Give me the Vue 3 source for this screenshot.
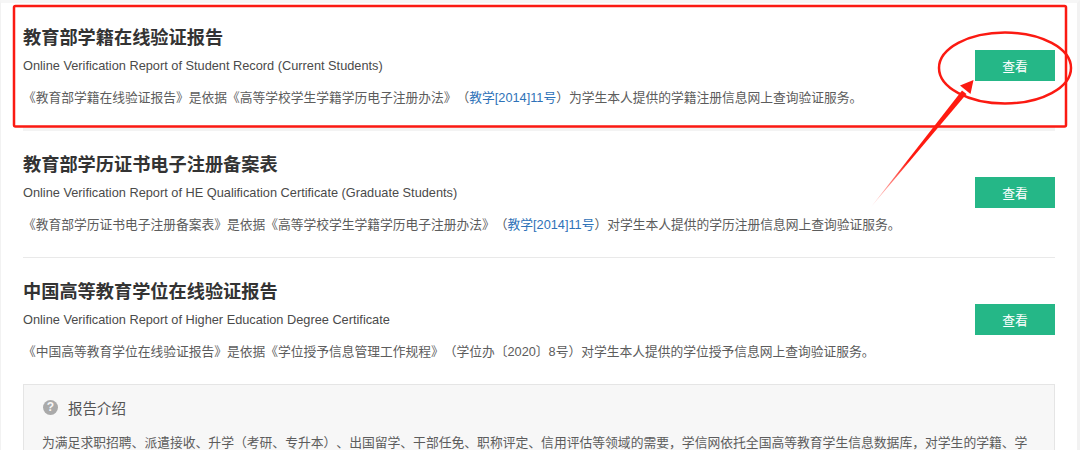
<script setup>
const reports = [
  {
    title: '教育部学籍在线验证报告',
    en: 'Online Verification Report of Student Record (Current Students)',
    before: '《教育部学籍在线验证报告》是依据《高等学校学生学籍学历电子注册办法》（',
    link: '教学[2014]11号',
    after: '）为学生本人提供的学籍注册信息网上查询验证服务。'
  },
  {
    title: '教育部学历证书电子注册备案表',
    en: 'Online Verification Report of HE Qualification Certificate (Graduate Students)',
    before: '《教育部学历证书电子注册备案表》是依据《高等学校学生学籍学历电子注册办法》（',
    link: '教学[2014]11号',
    after: '）对学生本人提供的学历注册信息网上查询验证服务。'
  },
  {
    title: '中国高等教育学位在线验证报告',
    en: 'Online Verification Report of Higher Education Degree Certificate',
    before: '《中国高等教育学位在线验证报告》是依据《学位授予信息管理工作规程》（学位办〔2020〕8号）对学生本人提供的学位授予信息网上查询验证服务。',
    link: '',
    after: ''
  }
]
</script>

<template>
  <div class="page">
    <div class="content">
      <section v-for="r in reports" :key="r.title" class="row">
        <div class="info">
          <h2 class="title">{{ r.title }}</h2>
          <p class="en">{{ r.en }}</p>
          <p class="desc">{{ r.before }}<a v-if="r.link" class="link">{{ r.link }}</a>{{ r.after }}</p>
        </div>
        <button class="btn">查看</button>
      </section>
      <section class="intro">
        <div class="intro-head">
          <span class="q">?</span>
          <span class="intro-title">报告介绍</span>
        </div>
        <p class="intro-text">为满足求职招聘、派遣接收、升学（考研、专升本）、出国留学、干部任免、职称评定、信用评估等领域的需要，学信网依托全国高等教育学生信息数据库，对学生的学籍、学</p>
      </section>
    </div>
    <svg class="marks" width="1080" height="450" viewBox="0 0 1080 450">
      <defs>
        <linearGradient id="tail" gradientUnits="userSpaceOnUse" x1="871" y1="207" x2="966" y2="92">
          <stop offset="0" stop-color="#ff1a10" stop-opacity="0.1" />
          <stop offset="0.4" stop-color="#ff1a10" />
          <stop offset="1" stop-color="#ff1a10" />
        </linearGradient>
      </defs>
      <rect x="14" y="6" width="1052" height="120.5" rx="1.5" fill="none" stroke="#fb1a12" stroke-width="2.5" />
      <ellipse cx="1005" cy="68" rx="66" ry="35.5" fill="none" stroke="#fb1a12" stroke-width="2.5" />
      <path d="M871 207 L962 90.5 L966.5 94 Z" fill="url(#tail)" />
      <path d="M973.5 80 L970.5 94 L960 85.5 Z" fill="#fb1a12" />
    </svg>
  </div>
</template>

<style scoped>
.page {
  position: relative;
  width: 1080px;
  height: 450px;
  overflow: hidden;
  background: #fff;
  box-sizing: border-box;
  border-top: 3px solid #f6f6f6;
  border-left: 1px solid #f2f2f2;
  border-right: 3px solid #f2f2f2;
  font-family: "Liberation Sans", "Noto Sans CJK SC", sans-serif;
  text-spacing-trim: space-all;
}
.content {
  box-sizing: border-box;
  width: 1054px;
  padding-left: 22px;
  padding-top: 1px;
}
.row {
  box-sizing: border-box;
  height: 127px;
  display: flex;
  justify-content: space-between;
  align-items: flex-start;
  border-bottom: 1px solid #e9e9e9;
  padding-top: 22px;
}
.row:nth-child(1) {
  border-bottom: 4px solid #f3f3f3;
}
.row:nth-child(3) {
  border-bottom: 0;
}
.title {
  margin: 0;
  font-size: 18.2px;
  line-height: 24px;
  font-weight: 700;
  color: #333;
}
.en {
  margin: 8px 0 0;
  font-size: 12.77px;
  line-height: 16px;
  color: #4a4a4a;
}
.desc {
  margin: 15px 0 0;
  font-size: 12.75px;
  line-height: 18px;
  color: #5c5c5c;
}
.link {
  color: #2e72b8;
}
.btn {
  width: 80px;
  height: 31px;
  margin-top: 24px;
  border: 0;
  padding: 0;
  background: #25b787;
  color: #fff;
  font-family: inherit;
  font-size: 12.8px;
}
.intro {
  box-sizing: border-box;
  height: 80px;
  margin-top: -1px;
  background: #f7f7f7;
  border: 1px solid #e5e5e5;
  border-bottom: 0;
  padding: 12px 18px 0;
}
.intro-head {
  display: flex;
  align-items: center;
  gap: 10px;
  height: 20px;
}
.q {
  width: 15px;
  height: 15px;
  margin-left: 1px;
  border-radius: 50%;
  background: #aaa;
  color: #f7f7f7;
  font-size: 12px;
  font-weight: 700;
  line-height: 15px;
  text-align: center;
}
.intro-title {
  font-size: 14.5px;
  color: #555;
}
.intro-text {
  margin: 17px 0 0;
  font-size: 12.8px;
  line-height: 18px;
  white-space: nowrap;
  color: #5c5c5c;
}
.marks {
  position: absolute;
  left: -1px;
  top: -3px;
  pointer-events: none;
}
</style>
